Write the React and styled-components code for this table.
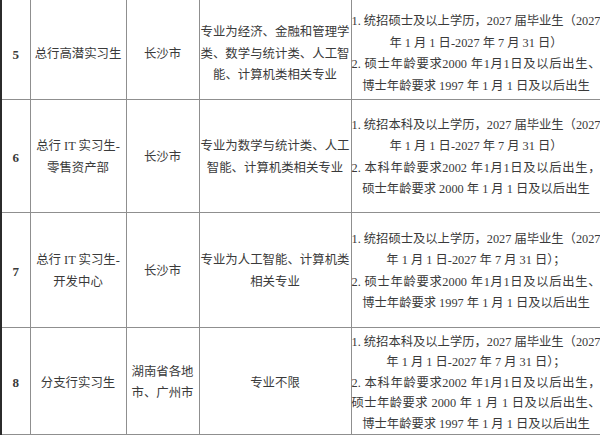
import React from 'react'
import styled, { createGlobalStyle } from "styled-components";

const GlobalStyle = createGlobalStyle`
    html, body {
        margin: 0;
        padding: 0;
        background: #ffffff;
    }
    body {
        width: 600px;
        height: 436px;
        overflow: hidden;
        font-family: "Liberation Serif", "Noto Sans CJK SC", serif;
        color: #3a3a3a;
    }
`

const rows = [
    {
        no: '5',
        post: ['总行高潜实习生'],
        city: ['长沙市'],
        major: [['专业为经济、金融和管理学', true], ['类、数学与统计类、人工智', true], ['能、计算机类相关专业']],
        req: [
            ['1. 统招硕士及以上学历，2027 届毕业生（2027', true],
            ['年 1 月 1 日-2027 年 7 月 31 日）'],
            ['2. 硕士年龄要求2000 年1月1日及以后出生、', true],
            ['博士年龄要求 1997 年 1 月 1 日及以后出生'],
        ],
        height: 99,
        pad: 10,
    },
    {
        no: '6',
        post: ['总行 IT 实习生-', '零售资产部'],
        city: ['长沙市'],
        major: [['专业为数学与统计类、人工', true], ['智能、计算机类相关专业']],
        req: [
            ['1. 统招本科及以上学历，2027 届毕业生（2027', true],
            ['年 1 月 1 日-2027 年 7 月 31 日）'],
            ['2. 本科年龄要求2002 年1月1日及以后出生，', true],
            ['硕士年龄要求 2000 年 1 月 1 日及以后出生'],
        ],
        height: 113,
        pad: 4,
    },
    {
        no: '7',
        post: ['总行 IT 实习生-', '开发中心'],
        city: ['长沙市'],
        major: [['专业为人工智能、计算机类', true], ['相关专业']],
        req: [
            ['1. 统招硕士及以上学历，2027 届毕业生（2027', true],
            ['年 1 月 1 日-2027 年 7 月 31 日）；'],
            ['2. 硕士年龄要求2000 年1月1日及以后出生、', true],
            ['博士年龄要求 1997 年 1 月 1 日及以后出生'],
        ],
        height: 115,
        pad: 4,
    },
    {
        no: '8',
        post: ['分支行实习生'],
        city: ['湖南省各地', '市、广州市'],
        major: [['专业不限']],
        req: [
            ['1. 统招本科及以上学历，2027 届毕业生（2027', true],
            ['年 1 月 1 日-2027 年 7 月 31 日）；'],
            ['2. 本科年龄要求2002 年1月1日及以后出生，', true],
            ['硕士年龄要求 2000 年 1 月 1 日及以后出生、', true],
            ['博士年龄要求 1997 年 1 月 1 日及以后出生'],
        ],
        height: 107,
        pad: 4,
        tight: true,
    },
]

export default function App() {
    return (
        <>
            <GlobalStyle />
            <Table>
                <colgroup>
                    <col style={{ width: 29 }} />
                    <col style={{ width: 96 }} />
                    <col style={{ width: 73 }} />
                    <col style={{ width: 152 }} />
                    <col style={{ width: 250 }} />
                </colgroup>
                <tbody>
                    {rows.map((r, i) => (
                        <Row key={r.no} $h={r.height} $first={i === 0} $pad={r.pad} $tight={r.tight}>
                            <NoCell>{r.no}</NoCell>
                            <Cell>
                                {r.post.map(t => <Line key={t}>{t}</Line>)}
                            </Cell>
                            <Cell>
                                {r.city.map(t => <Line key={t}>{t}</Line>)}
                            </Cell>
                            <Cell>
                                {r.major.map(([t, full]) => <Line key={t} $full={full}>{t}</Line>)}
                            </Cell>
                            <ReqCell>
                                {r.req.map(([t, full]) => <Line key={t} $full={full}>{t}</Line>)}
                            </ReqCell>
                        </Row>
                    ))}
                </tbody>
            </Table>
        </>
    )
}

const Table = styled.table`
    width: 600px;
    table-layout: fixed;
    border-collapse: collapse;
    border-left: 2px solid #2b2b2b;
`

const Cell = styled.td`
    border: 1px solid #8f8f8f;
    padding: 0 1px;
    vertical-align: middle;
    text-align: center;
    font-size: 12.4px;
    line-height: 21.4px;
`

const NoCell = styled(Cell)`
    font-weight: bold;
    font-size: 13px;
    padding: 0;
`

const ReqCell = styled(Cell)`
    padding: 0;
    font-size: 12.3px;
`

const Row = styled.tr`
    height: ${props => props.$h}px;
    & > td {
        border-top: ${props => props.$first ? 'none' : '1px solid #8f8f8f'};
        padding-top: ${props => props.$pad}px;
        ${props => props.$tight && 'line-height: 20.6px;'}
    }
`

const Line = styled.div`
    white-space: nowrap;
    text-align: center;
    ${props => props.$full && `
        white-space: normal;
        word-break: keep-all;
        text-align: justify;
        text-align-last: justify;
        text-justify: inter-character;
    `}
`
